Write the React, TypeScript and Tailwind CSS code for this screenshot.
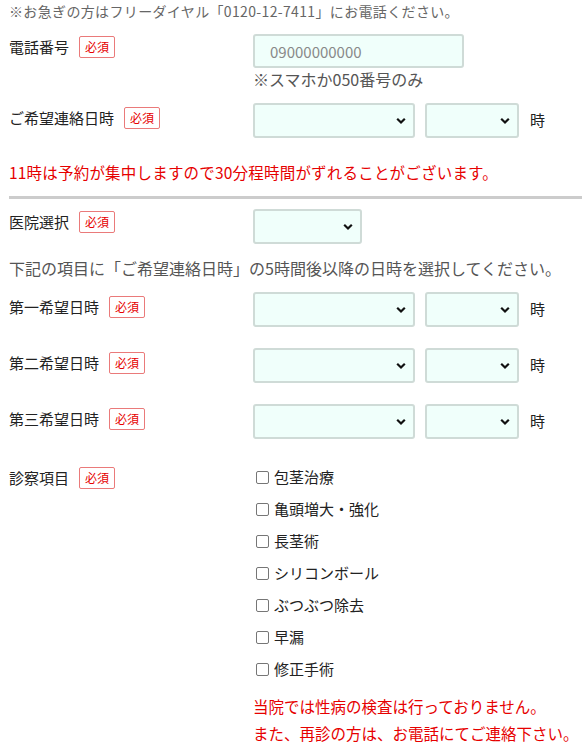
import React from "react";

const Badge = () => (
  <span className="ml-[10px] inline-flex h-[22px] w-[36px] items-center justify-center rounded-[2px] border border-[#ea7a7a] text-[12px] leading-none text-[#e60000]">
    必須
  </span>
);

const Label = ({ text }: { text: string }) => (
  <div className="flex h-[24px] w-[244px] shrink-0 items-center pt-[1px] text-[15px] leading-[24px] text-[#222]">
    <span>{text}</span>
    <Badge />
  </div>
);

const Chevron = () => (
  <svg
    className="pointer-events-none absolute right-[9px] top-1/2 -translate-y-1/2"
    width="10"
    height="7"
    viewBox="0 0 10 7"
  >
    <path d="M1.2 1.2 L5 5 L8.8 1.2" fill="none" stroke="#111" strokeWidth="2.2" />
  </svg>
);

const Select = ({ w }: { w: string }) => (
  <div className={`relative h-[35px] ${w}`}>
    <select className="h-full w-full appearance-none rounded-[3px] border-2 border-[#cfdbd7] bg-[#f0fffb] outline-none">
      <option></option>
    </select>
    <Chevron />
  </div>
);

const DateRow = ({ label, className }: { label: string; className: string }) => (
  <div className={`flex ${className}`}>
    <div className="mt-[2px]">
      <Label text={label} />
    </div>
    <div className="flex items-center">
      <Select w="w-[162px]" />
      <div className="ml-[10px]">
        <Select w="w-[94px]" />
      </div>
      <span className="ml-[11px] text-[15px] text-[#222]">時</span>
    </div>
  </div>
);

const items = [
  "包茎治療",
  "亀頭増大・強化",
  "長茎術",
  "シリコンボール",
  "ぶつぶつ除去",
  "早漏",
  "修正手術",
];

export default function App() {
  return (
    <div
      className="w-[582px] overflow-hidden bg-white pl-[9px]"
      style={{ fontFamily: '"Noto Sans CJK JP", "Noto Sans", sans-serif' }}
    >
      <p className="whitespace-nowrap text-[14px] leading-[22px] tracking-[0.35px] text-[#666]">
        ※お急ぎの方はフリーダイヤル「0120-12-7411」にお電話ください。
      </p>

      <div className="mt-[12px] flex">
        <Label text="電話番号" />
        <div>
          <input
            type="text"
            placeholder="09000000000"
            className="h-[34px] w-[211px] rounded-[3px] border-2 border-[#cfdbd7] bg-[#f0fffb] pl-[15px] text-[15px] text-[#333] outline-none placeholder:text-[#888]"
          />
          <p className="text-[16px] leading-[22px] text-[#555]">※スマホか050番号のみ</p>
        </div>
      </div>

      <DateRow label="ご希望連絡日時" className="mt-[13px]" />

      <p className="mt-[22px] whitespace-nowrap text-[15.5px] leading-[24px] tracking-[0.2px] text-[#e60000]">
        11時は予約が集中しますので30分程時間がずれることがございます。
      </p>

      <div className="mt-[12px] h-[3px] bg-[#cccccc]" />

      <div className="mt-[10px] flex">
        <Label text="医院選択" />
        <Select w="w-[109px]" />
      </div>

      <p className="mt-[12px] whitespace-nowrap text-[16px] leading-[24px] text-[#555]">
        下記の項目に「ご希望連絡日時」の5時間後以降の日時を選択してください。
      </p>

      <DateRow label="第一希望日時" className="mt-[12px]" />
      <DateRow label="第二希望日時" className="mt-[21px]" />
      <DateRow label="第三希望日時" className="mt-[21px]" />

      <div className="mt-[26px] flex">
        <Label text="診察項目" />
        <div>
          <div className="flex flex-col gap-[8px]">
            {items.map((it) => (
              <label key={it} className="flex h-[24px] items-center text-[15px] text-[#222]">
                <input
                  type="checkbox"
                  className="ml-[3px] mr-[5px] h-[13px] w-[13px] appearance-none rounded-[2px] border border-[#767676] bg-white"
                />
                <span>{it}</span>
              </label>
            ))}
          </div>
          <div className="mt-[12px] whitespace-nowrap text-[15.5px] leading-[27px] text-[#e60000]">
            <p>当院では性病の検査は行っておりません。</p>
            <p>また、再診の方は、お電話にてご連絡下さい。</p>
          </div>
        </div>
      </div>
    </div>
  );
}
